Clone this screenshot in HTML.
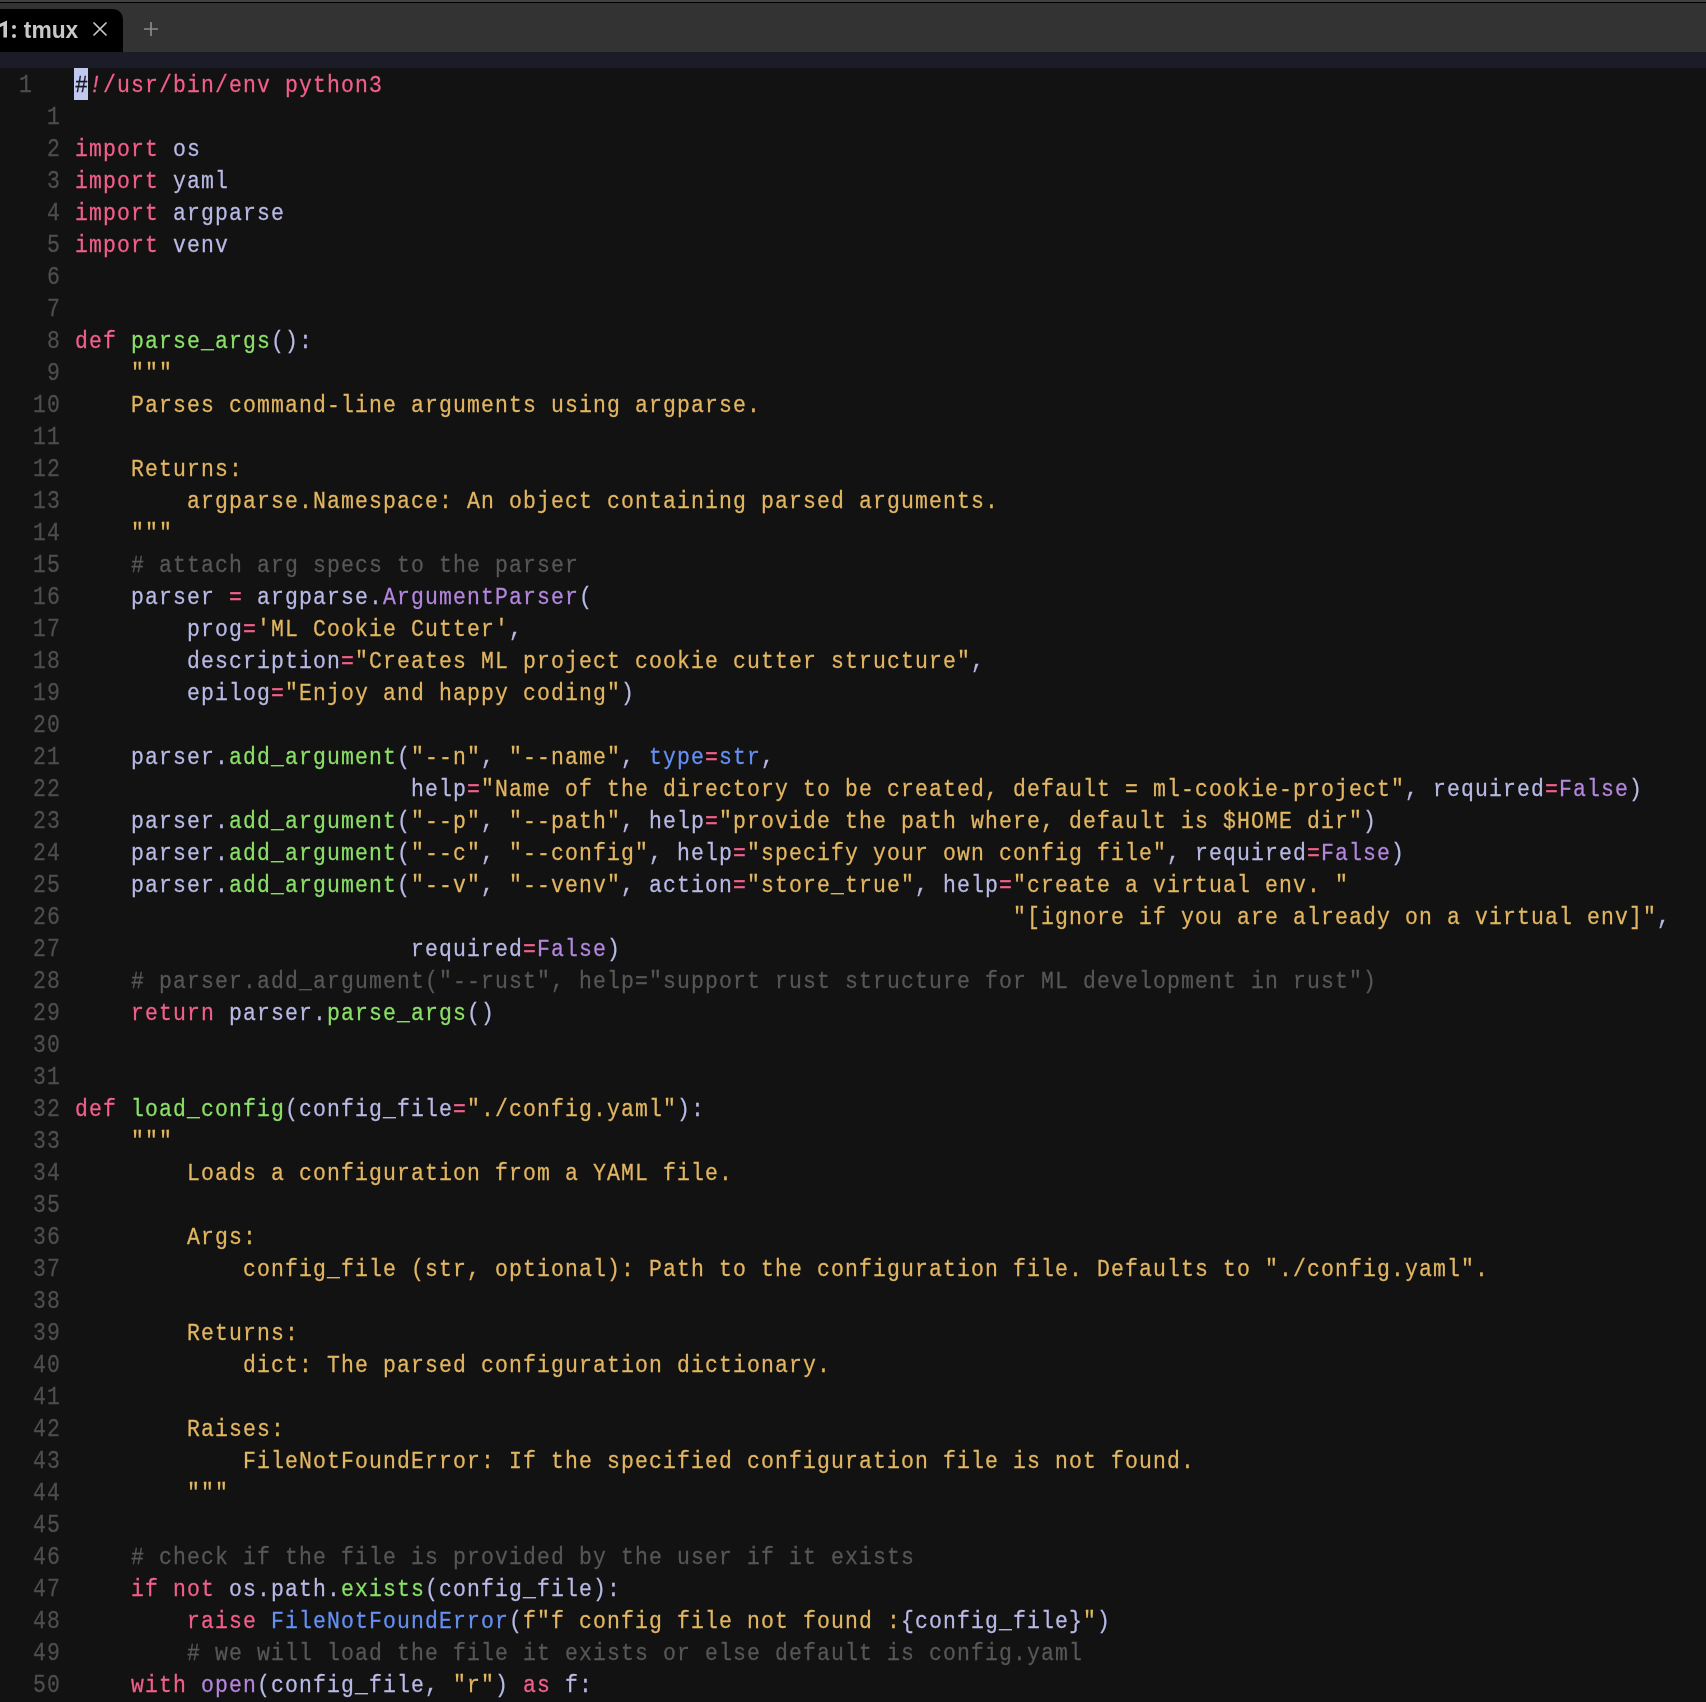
<!DOCTYPE html>
<html><head><meta charset="utf-8"><style>
html,body{margin:0;padding:0;}
body{width:1706px;height:1702px;overflow:hidden;background:#121212;position:relative;}
.topband{position:absolute;left:0;top:0;width:1706px;height:2px;background:#414141;}
.topline{position:absolute;left:0;top:2px;width:1706px;height:1px;background:#000;}
.tabbar{position:absolute;left:0;top:3px;width:1706px;height:49px;background:#333333;}
.tab{will-change:transform;position:absolute;left:0;top:9px;width:123px;height:43px;background:#000;border-top-right-radius:10px;overflow:hidden;}
.tabtext{position:absolute;top:0;line-height:43px;font-family:"Liberation Sans",sans-serif;font-weight:bold;font-size:22.4px;color:#c8c8c8;white-space:pre;transform:scale(1,1.08);transform-origin:0 29px;}
.one{position:absolute;left:0;top:11.2px;}
.dot{position:absolute;width:4px;height:4px;border-radius:50%;background:#c8c8c8;left:12.3px;}
.d1{top:16px;}
.d2{top:25px;}
.t3{left:23.8px;font-size:22.8px;}
.close{position:absolute;left:92px;top:11.8px;}
.plus{position:absolute;left:142.5px;top:20.5px;}
.navy{position:absolute;left:0;top:52px;width:1706px;height:16px;background:#1b1c28;}
.editor{position:absolute;left:0;top:0;will-change:transform;}
.row{position:absolute;left:0;height:32px;width:1706px;font-family:"Liberation Mono",monospace;font-size:23.333px;line-height:32px;white-space:pre;-webkit-text-stroke:0.25px currentColor;}
.row .code{position:absolute;left:74.56px;top:1.8px;letter-spacing:1.2174px;transform:scale(0.92,1.05);transform-origin:0 22.4px;}
.nr{position:absolute;top:1.8px;color:#4e4e4e;letter-spacing:1.2174px;transform:scale(0.92,1.09);transform-origin:0 22.4px;}
.na{position:absolute;left:18.56px;top:1.8px;color:#4e4e4e;letter-spacing:1.2174px;transform:scale(0.92,1.09);transform-origin:0 22.4px;}
.curbg{position:absolute;left:74px;top:0;width:14px;height:32px;background:#c2c9f0;}
.cur{color:#15151f;}
.k{color:#f2608b;}
.f{color:#b9bae6;}
.g{color:#8ce068;}
.s{color:#e3b762;}
.b{color:#6691f4;}
.p{color:#b487de;}
.c{color:#575757;}
.it{font-style:italic;}

</style></head><body>
<div class="topband"></div><div class="topline"></div>
<div class="tabbar"></div>
<div class="tab"><svg class="one" width="10" height="20" viewBox="0 0 10 20"><path d="M3.2 2.2 L7 0.4 L7 17.4 L3.4 17.4 L3.4 5.6 L-1 7.6 L-1 4.2 Z" fill="#c8c8c8"/></svg><div class="dot d1"></div><div class="dot d2"></div><span class="tabtext t3">tmux</span>
<svg class="close" width="16" height="16" viewBox="0 0 16 16"><path d="M2 2 L14 14 M14 2 L2 14" stroke="#c8c8c8" stroke-width="1.7" stroke-linecap="round"/></svg>
</div>
<svg class="plus" width="16" height="16" viewBox="0 0 16 16"><path d="M8 1 V15 M1 8 H15" stroke="#8a8a8a" stroke-width="1.7"/></svg>
<div class="navy"></div>
<div class="editor">
<div class="row" style="top:68px"><span class="na">1</span><div class="curbg"></div><div class="code"><span class="cur">#</span><span class="k it">!</span><span class="k">/usr/bin/env python3</span></div></div>
<div class="row" style="top:100px"><span class="nr" style="left:46.56px">1</span><div class="code"></div></div>
<div class="row" style="top:132px"><span class="nr" style="left:46.56px">2</span><div class="code"><span class="k">import</span><span class="f"> os</span></div></div>
<div class="row" style="top:164px"><span class="nr" style="left:46.56px">3</span><div class="code"><span class="k">import</span><span class="f"> yaml</span></div></div>
<div class="row" style="top:196px"><span class="nr" style="left:46.56px">4</span><div class="code"><span class="k">import</span><span class="f"> argparse</span></div></div>
<div class="row" style="top:228px"><span class="nr" style="left:46.56px">5</span><div class="code"><span class="k">import</span><span class="f"> venv</span></div></div>
<div class="row" style="top:260px"><span class="nr" style="left:46.56px">6</span><div class="code"></div></div>
<div class="row" style="top:292px"><span class="nr" style="left:46.56px">7</span><div class="code"></div></div>
<div class="row" style="top:324px"><span class="nr" style="left:46.56px">8</span><div class="code"><span class="k">def</span><span class="f"> </span><span class="g">parse_args</span><span class="f">():</span></div></div>
<div class="row" style="top:356px"><span class="nr" style="left:46.56px">9</span><div class="code"><span class="s">    """</span></div></div>
<div class="row" style="top:388px"><span class="nr" style="left:32.56px">10</span><div class="code"><span class="s">    Parses command-line arguments using argparse.</span></div></div>
<div class="row" style="top:420px"><span class="nr" style="left:32.56px">11</span><div class="code"></div></div>
<div class="row" style="top:452px"><span class="nr" style="left:32.56px">12</span><div class="code"><span class="s">    Returns:</span></div></div>
<div class="row" style="top:484px"><span class="nr" style="left:32.56px">13</span><div class="code"><span class="s">        argparse.Namespace: An object containing parsed arguments.</span></div></div>
<div class="row" style="top:516px"><span class="nr" style="left:32.56px">14</span><div class="code"><span class="s">    """</span></div></div>
<div class="row" style="top:548px"><span class="nr" style="left:32.56px">15</span><div class="code"><span class="c">    # attach arg specs to the parser</span></div></div>
<div class="row" style="top:580px"><span class="nr" style="left:32.56px">16</span><div class="code"><span class="f">    parser </span><span class="k">=</span><span class="f"> argparse.</span><span class="p">ArgumentParser</span><span class="f">(</span></div></div>
<div class="row" style="top:612px"><span class="nr" style="left:32.56px">17</span><div class="code"><span class="f">        prog</span><span class="k">=</span><span class="s">'ML Cookie Cutter'</span><span class="f">,</span></div></div>
<div class="row" style="top:644px"><span class="nr" style="left:32.56px">18</span><div class="code"><span class="f">        description</span><span class="k">=</span><span class="s">"Creates ML project cookie cutter structure"</span><span class="f">,</span></div></div>
<div class="row" style="top:676px"><span class="nr" style="left:32.56px">19</span><div class="code"><span class="f">        epilog</span><span class="k">=</span><span class="s">"Enjoy and happy coding"</span><span class="f">)</span></div></div>
<div class="row" style="top:708px"><span class="nr" style="left:32.56px">20</span><div class="code"></div></div>
<div class="row" style="top:740px"><span class="nr" style="left:32.56px">21</span><div class="code"><span class="f">    parser.</span><span class="g">add_argument</span><span class="f">(</span><span class="s">"--n"</span><span class="f">, </span><span class="s">"--name"</span><span class="f">, </span><span class="b">type</span><span class="k">=</span><span class="b">str</span><span class="f">,</span></div></div>
<div class="row" style="top:772px"><span class="nr" style="left:32.56px">22</span><div class="code"><span class="f">                        help</span><span class="k">=</span><span class="s">"Name of the directory to be created, default = ml-cookie-project"</span><span class="f">, required</span><span class="k">=</span><span class="p">False</span><span class="f">)</span></div></div>
<div class="row" style="top:804px"><span class="nr" style="left:32.56px">23</span><div class="code"><span class="f">    parser.</span><span class="g">add_argument</span><span class="f">(</span><span class="s">"--p"</span><span class="f">, </span><span class="s">"--path"</span><span class="f">, help</span><span class="k">=</span><span class="s">"provide the path where, default is $HOME dir"</span><span class="f">)</span></div></div>
<div class="row" style="top:836px"><span class="nr" style="left:32.56px">24</span><div class="code"><span class="f">    parser.</span><span class="g">add_argument</span><span class="f">(</span><span class="s">"--c"</span><span class="f">, </span><span class="s">"--config"</span><span class="f">, help</span><span class="k">=</span><span class="s">"specify your own config file"</span><span class="f">, required</span><span class="k">=</span><span class="p">False</span><span class="f">)</span></div></div>
<div class="row" style="top:868px"><span class="nr" style="left:32.56px">25</span><div class="code"><span class="f">    parser.</span><span class="g">add_argument</span><span class="f">(</span><span class="s">"--v"</span><span class="f">, </span><span class="s">"--venv"</span><span class="f">, action</span><span class="k">=</span><span class="s">"store_true"</span><span class="f">, help</span><span class="k">=</span><span class="s">"create a virtual env. "</span></div></div>
<div class="row" style="top:900px"><span class="nr" style="left:32.56px">26</span><div class="code"><span class="f">                                                                   </span><span class="s">"[ignore if you are already on a virtual env]"</span><span class="f">,</span></div></div>
<div class="row" style="top:932px"><span class="nr" style="left:32.56px">27</span><div class="code"><span class="f">                        required</span><span class="k">=</span><span class="p">False</span><span class="f">)</span></div></div>
<div class="row" style="top:964px"><span class="nr" style="left:32.56px">28</span><div class="code"><span class="c">    # parser.add_argument("--rust", help="support rust structure for ML development in rust")</span></div></div>
<div class="row" style="top:996px"><span class="nr" style="left:32.56px">29</span><div class="code"><span class="k">    return</span><span class="f"> parser.</span><span class="g">parse_args</span><span class="f">()</span></div></div>
<div class="row" style="top:1028px"><span class="nr" style="left:32.56px">30</span><div class="code"></div></div>
<div class="row" style="top:1060px"><span class="nr" style="left:32.56px">31</span><div class="code"></div></div>
<div class="row" style="top:1092px"><span class="nr" style="left:32.56px">32</span><div class="code"><span class="k">def</span><span class="f"> </span><span class="g">load_config</span><span class="f">(config_file</span><span class="k">=</span><span class="s">"./config.yaml"</span><span class="f">):</span></div></div>
<div class="row" style="top:1124px"><span class="nr" style="left:32.56px">33</span><div class="code"><span class="s">    """</span></div></div>
<div class="row" style="top:1156px"><span class="nr" style="left:32.56px">34</span><div class="code"><span class="s">        Loads a configuration from a YAML file.</span></div></div>
<div class="row" style="top:1188px"><span class="nr" style="left:32.56px">35</span><div class="code"></div></div>
<div class="row" style="top:1220px"><span class="nr" style="left:32.56px">36</span><div class="code"><span class="s">        Args:</span></div></div>
<div class="row" style="top:1252px"><span class="nr" style="left:32.56px">37</span><div class="code"><span class="s">            config_file (str, optional): Path to the configuration file. Defaults to "./config.yaml".</span></div></div>
<div class="row" style="top:1284px"><span class="nr" style="left:32.56px">38</span><div class="code"></div></div>
<div class="row" style="top:1316px"><span class="nr" style="left:32.56px">39</span><div class="code"><span class="s">        Returns:</span></div></div>
<div class="row" style="top:1348px"><span class="nr" style="left:32.56px">40</span><div class="code"><span class="s">            dict: The parsed configuration dictionary.</span></div></div>
<div class="row" style="top:1380px"><span class="nr" style="left:32.56px">41</span><div class="code"></div></div>
<div class="row" style="top:1412px"><span class="nr" style="left:32.56px">42</span><div class="code"><span class="s">        Raises:</span></div></div>
<div class="row" style="top:1444px"><span class="nr" style="left:32.56px">43</span><div class="code"><span class="s">            FileNotFoundError: If the specified configuration file is not found.</span></div></div>
<div class="row" style="top:1476px"><span class="nr" style="left:32.56px">44</span><div class="code"><span class="s">        """</span></div></div>
<div class="row" style="top:1508px"><span class="nr" style="left:32.56px">45</span><div class="code"></div></div>
<div class="row" style="top:1540px"><span class="nr" style="left:32.56px">46</span><div class="code"><span class="c">    # check if the file is provided by the user if it exists</span></div></div>
<div class="row" style="top:1572px"><span class="nr" style="left:32.56px">47</span><div class="code"><span class="k">    if not</span><span class="f"> os.path.</span><span class="g">exists</span><span class="f">(config_file):</span></div></div>
<div class="row" style="top:1604px"><span class="nr" style="left:32.56px">48</span><div class="code"><span class="k">        raise</span><span class="f"> </span><span class="b">FileNotFoundError</span><span class="f">(</span><span class="s">f"f config file not found :</span><span class="f">{config_file}</span><span class="s">"</span><span class="f">)</span></div></div>
<div class="row" style="top:1636px"><span class="nr" style="left:32.56px">49</span><div class="code"><span class="c">        # we will load the file it exists or else default is config.yaml</span></div></div>
<div class="row" style="top:1668px"><span class="nr" style="left:32.56px">50</span><div class="code"><span class="k">    with</span><span class="f"> </span><span class="p">open</span><span class="f">(config_file, </span><span class="s">"r"</span><span class="f">) </span><span class="k">as</span><span class="f"> f:</span></div></div>
<div class="row" style="top:1700px"><span class="nr" style="left:60.56px"></span><div class="code"></div></div>
</div>
</body></html>
